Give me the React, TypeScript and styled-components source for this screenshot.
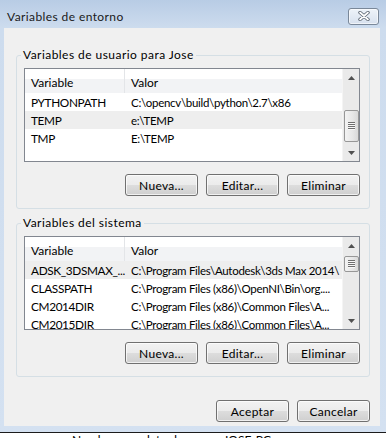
import styled, { createGlobalStyle } from 'styled-components';

const GlobalStyle = createGlobalStyle`
  body {
    margin: 0;
    background: #ffffff;
    font-family: Lato, 'Liberation Sans', sans-serif;
    font-size: 12px;
    color: #000000;
    overflow: hidden;
  }
`;

const Window = styled.div`
  width: 386px;
  box-sizing: border-box;
  padding: 0 6px 6px 4px;
  background: linear-gradient(#b8cce5 0, #cddcee 28px, #d4e1f1 100%);
  border-bottom: 1px solid #1c1c1c;
`;

const TitleBar = styled.div`
  height: 28px;
  box-sizing: border-box;
  padding: 4px 1px 0 3px;
  display: flex;
  align-items: center;
  justify-content: space-between;
`;

const Title = styled.span`
  font-size: 12px;
  letter-spacing: 0.4px;
  color: #1a1a1a;
`;

const CloseButton = styled.div`
  width: 31px;
  height: 17px;
  box-sizing: border-box;
  border: 1px solid #7a8899;
  border-radius: 3px;
  background: linear-gradient(#eef3f9, #d7e1ee);
  box-shadow: inset 0 0 0 1px rgba(255, 255, 255, 0.6);
  display: flex;
  align-items: center;
  justify-content: center;
`;

const Client = styled.div`
  height: 398px;
  box-sizing: border-box;
  background: #f0f0f0;
  padding: 19px 10px 0 12px;
  display: flex;
  flex-direction: column;
`;

const Group = styled.fieldset<{ $top: number }>`
  margin: ${p => p.$top}px 0 0 0;
  padding: 5px 9px 12px 7px;
  border: 1px solid #d5dfe5;
  border-radius: 3px;
  min-width: 0;
`;

const GroupTitle = styled.legend`
  padding: 0 2px;
  margin-left: -3px;
  line-height: 16px;
  letter-spacing: 0.45px;
`;

const ListView = styled.div`
  height: 94px;
  box-sizing: border-box;
  border: 1px solid #828790;
  background: #ffffff;
  display: flex;
  overflow: hidden;
`;

const ListBody = styled.div`
  flex: 1;
  min-width: 0;
`;

const HeaderRow = styled.div`
  height: 24px;
  display: grid;
  grid-template-columns: 100px 1fr;
  background: linear-gradient(#ffffff 0 10px, #f2f3f5 10px 100%);
`;

const HeaderCell = styled.div<{ $divider?: boolean }>`
  display: flex;
  align-items: center;
  padding: 3px 0 0 6px;
  box-sizing: border-box;
  border-right: ${p => (p.$divider ? '1px solid #e3e5e8' : 'none')};
`;

const Row = styled.div<{ $hot?: boolean }>`
  height: 18px;
  display: grid;
  grid-template-columns: 100px 1fr;
  background: ${p => (p.$hot ? '#eeeeee' : 'transparent')};
`;

const Cell = styled.div<{ $value?: boolean }>`
  display: flex;
  align-items: center;
  padding-left: 6px;
  white-space: nowrap;
  overflow: hidden;
  font-size: ${p => (p.$value ? '11.5px' : '11.8px')};
  letter-spacing: ${p => (p.$value ? '-0.3px' : '-0.35px')};
`;

const ScrollBar = styled.div`
  width: 17px;
  flex: none;
  display: flex;
  flex-direction: column;
  background: #eaeaea;
  border-left: 1px solid #f4f4f4;
  box-sizing: border-box;
`;

const ArrowButton = styled.div`
  height: 17px;
  flex: none;
  display: flex;
  align-items: center;
  justify-content: center;
`;

const Track = styled.div`
  flex: 1;
  display: flex;
  flex-direction: column;
  align-items: center;
`;

const Thumb = styled.div`
  width: 15px;
  box-sizing: border-box;
  border: 1px solid #979797;
  border-radius: 2px;
  background: linear-gradient(to right, #f3f3f3, #e6e6e6 60%, #d9d9d9);
  display: flex;
  align-items: center;
  justify-content: center;
`;

const Grip = styled.span`
  width: 7px;
  height: 8px;
  background: repeating-linear-gradient(#6f6f6f 0 1px, #f8f8f8 1px 2px);
`;

const ButtonRow = styled.div<{ $top: number }>`
  margin-top: ${p => p.$top}px;
  display: flex;
  justify-content: flex-end;
  gap: 8px;
`;

const Button = styled.div`
  width: 73px;
  height: 22px;
  box-sizing: border-box;
  border: 1px solid #707070;
  border-radius: 3px;
  background: linear-gradient(#f2f2f2 0, #ebebeb 50%, #dddddd 50%, #cfcfcf 100%);
  box-shadow: inset 0 0 0 1px rgba(255, 255, 255, 0.7);
  display: flex;
  align-items: center;
  justify-content: center;
  font-size: 12px;
  letter-spacing: 0.3px;
`;

const Behind = styled.div`
  height: 6px;
  overflow: hidden;
  display: flex;
  gap: 40px;
  padding-left: 72px;
  line-height: 14px;
  color: #000000;
`;

interface EnvVar {
  name: string;
  value: string;
  hot?: boolean;
}

const userVars: EnvVar[] = [
  { name: 'PYTHONPATH', value: 'C:\\opencv\\build\\python\\2.7\\x86' },
  { name: 'TEMP', value: 'e:\\TEMP', hot: true },
  { name: 'TMP', value: 'E:\\TEMP' },
];

const systemVars: EnvVar[] = [
  { name: 'ADSK_3DSMAX_...', value: 'C:\\Program Files\\Autodesk\\3ds Max 2014\\', hot: true },
  { name: 'CLASSPATH', value: 'C:\\Program Files (x86)\\OpenNI\\Bin\\org....' },
  { name: 'CM2014DIR', value: 'C:\\Program Files (x86)\\Common Files\\A...' },
  { name: 'CM2015DIR', value: 'C:\\Program Files (x86)\\Common Files\\A...' },
];

function Arrow({ up }: { up?: boolean }) {
  return (
    <svg width="7" height="4" viewBox="0 0 7 4">
      <polygon points={up ? '3.5,0 7,4 0,4' : '0,0 7,0 3.5,4'} fill="#505050" />
    </svg>
  );
}

function VarList({ rows, thumbTop, thumbHeight }: { rows: EnvVar[]; thumbTop: number; thumbHeight: number }) {
  return (
    <ListView>
      <ListBody>
        <HeaderRow>
          <HeaderCell $divider>Variable</HeaderCell>
          <HeaderCell>Valor</HeaderCell>
        </HeaderRow>
        {rows.map((r, i) => (
          <Row key={i} $hot={r.hot}>
            <Cell>{r.name}</Cell>
            <Cell $value>{r.value}</Cell>
          </Row>
        ))}
      </ListBody>
      <ScrollBar>
        <ArrowButton><Arrow up /></ArrowButton>
        <Track>
          <Thumb style={{ marginTop: thumbTop, height: thumbHeight }}>
            <Grip />
          </Thumb>
        </Track>
        <ArrowButton><Arrow /></ArrowButton>
      </ScrollBar>
    </ListView>
  );
}

function Actions() {
  return (
    <ButtonRow $top={12}>
      <Button>Nueva...</Button>
      <Button>Editar...</Button>
      <Button>Eliminar</Button>
    </ButtonRow>
  );
}

export default function App() {
  return (
    <>
      <GlobalStyle />
      <Window>
        <TitleBar>
          <Title>Variables de entorno</Title>
          <CloseButton>
            <svg width="12" height="10" viewBox="0 0 12 10">
              <path d="M2 1.5 L10 8.5 M10 1.5 L2 8.5" stroke="#5a6470" strokeWidth="3.4" strokeLinecap="round" />
              <path d="M2 1.5 L10 8.5 M10 1.5 L2 8.5" stroke="#ffffff" strokeWidth="1.7" strokeLinecap="round" />
            </svg>
          </CloseButton>
        </TitleBar>
        <Client>
          <Group $top={0}>
            <GroupTitle>Variables de usuario para Jose</GroupTitle>
            <VarList rows={userVars} thumbTop={24} thumbHeight={32} />
            <Actions />
          </Group>
          <Group $top={6}>
            <GroupTitle>Variables del sistema</GroupTitle>
            <VarList rows={systemVars} thumbTop={2} thumbHeight={16} />
            <Actions />
          </Group>
          <ButtonRow $top={23}>
            <Button>Aceptar</Button>
            <Button>Cancelar</Button>
          </ButtonRow>
        </Client>
      </Window>
      <Behind>
        <span>Nombre completo de</span>
        <span>JOSE-PC</span>
      </Behind>
    </>
  );
}
